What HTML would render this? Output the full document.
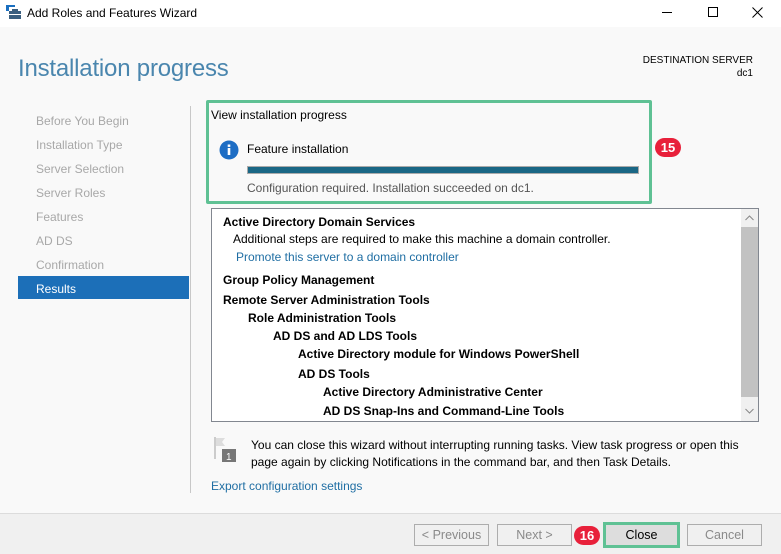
<!DOCTYPE html>
<html><head><meta charset="utf-8"><style>
*{margin:0;padding:0;box-sizing:border-box}
body{width:781px;height:554px;overflow:hidden;background:#f9f9f9;font-family:"Liberation Sans",sans-serif;font-size:12px;color:#000;position:relative}
.a{position:absolute;white-space:nowrap}
.nav{color:#a8a8a8;font-size:12px;left:36px}
.b{font-weight:bold}
.btn{position:absolute;top:524px;height:22px;border:1px solid #adadad;background:#f0f0f0;color:#8a8a8a;text-align:center;line-height:20px;font-size:12.5px}
.badge{position:absolute;background:#e8203a;color:#fff;font-weight:bold;font-size:13px;border-radius:10px;height:19px;line-height:19px;text-align:center;width:26px}
</style></head><body>
<div class="a" style="left:0;top:0;width:781px;height:27px;background:#fff"></div>
<svg class="a" style="left:6px;top:5px" width="16" height="15"><rect x="0" y="0" width="3" height="6" fill="#1a6fc0"/><rect x="0" y="0" width="9" height="2" fill="#1a6fc0"/><rect x="3" y="6" width="12" height="8" fill="#3a5f80"/><rect x="6" y="4" width="6" height="2" fill="#3a5f80"/><rect x="3" y="9" width="12" height="1" fill="#fff"/></svg>
<div class="a" style="left:27px;top:6px;font-size:12px">Add Roles and Features Wizard</div>
<div class="a" style="left:662px;top:12px;width:10px;height:1px;background:#000"></div>
<div class="a" style="left:708px;top:7px;width:10px;height:10px;border:1px solid #000"></div>
<svg class="a" style="left:752px;top:7px" width="11" height="11"><path d="M0.5 0.5L10.5 10.5M10.5 0.5L0.5 10.5" stroke="#000" stroke-width="1"/></svg>
<div class="a" style="left:18px;top:55px;font-size:24px;color:#4a86ae;letter-spacing:-0.2px">Installation progress</div>
<div class="a" style="right:28px;top:54px;font-size:10px;text-align:right;line-height:13px">DESTINATION SERVER<br>dc1</div>
<div class="a" style="left:190px;top:106px;width:1px;height:387px;background:#c8c8c8"></div>
<div class="a nav" style="top:114px">Before You Begin</div>
<div class="a nav" style="top:138px">Installation Type</div>
<div class="a nav" style="top:162px">Server Selection</div>
<div class="a nav" style="top:186px">Server Roles</div>
<div class="a nav" style="top:210px">Features</div>
<div class="a nav" style="top:234px">AD DS</div>
<div class="a nav" style="top:258px">Confirmation</div>
<div class="a" style="left:18px;top:276px;width:171px;height:23px;background:#1c6fb8"></div>
<div class="a" style="left:36px;top:282px;color:#fff">Results</div>
<div class="a" style="left:206px;top:100px;width:446px;height:104px;border:3px solid #5fc194;border-radius:2px"></div>
<div class="a" style="left:211px;top:108px">View installation progress</div>
<svg class="a" style="left:219px;top:140px" width="20" height="20"><circle cx="10" cy="10" r="9.5" fill="#1d6dc4"/><rect x="8.7" y="8" width="2.6" height="7" fill="#fff"/><rect x="8.7" y="4.5" width="2.6" height="2.4" fill="#fff"/></svg>
<div class="a" style="left:247px;top:142px">Feature installation</div>
<div class="a" style="left:247px;top:166px;width:392px;height:8px;background:#1a6785;border:1px solid #aaa"></div>
<div class="a" style="left:247px;top:181px;color:#555">Configuration required. Installation succeeded on dc1.</div>
<div class="badge" style="left:655px;top:138px">15</div>
<div class="a" style="left:211px;top:208px;width:548px;height:214px;border:1px solid #828790;background:#fff"></div>
<div class="a" style="left:741px;top:209px;width:17px;height:212px;background:#f0f0f0"></div>
<div class="a" style="left:741px;top:227px;width:17px;height:170px;background:#c2c2c2"></div>
<svg class="a" style="left:745px;top:215px" width="9" height="6"><path d="M0.5 5L4.5 1L8.5 5" stroke="#888" fill="none"/></svg>
<svg class="a" style="left:745px;top:408px" width="9" height="6"><path d="M0.5 1L4.5 5L8.5 1" stroke="#888" fill="none"/></svg>
<div class="a b" style="left:223px;top:215px">Active Directory Domain Services</div>
<div class="a" style="left:233px;top:232px">Additional steps are required to make this machine a domain controller.</div>
<div class="a" style="left:236px;top:250px;color:#1f6ea3">Promote this server to a domain controller</div>
<div class="a b" style="left:223px;top:273px">Group Policy Management</div>
<div class="a b" style="left:223px;top:293px">Remote Server Administration Tools</div>
<div class="a b" style="left:248px;top:311px">Role Administration Tools</div>
<div class="a b" style="left:273px;top:329px">AD DS and AD LDS Tools</div>
<div class="a b" style="left:298px;top:347px">Active Directory module for Windows PowerShell</div>
<div class="a b" style="left:298px;top:367px">AD DS Tools</div>
<div class="a b" style="left:323px;top:385px">Active Directory Administrative Center</div>
<div class="a b" style="left:323px;top:404px">AD DS Snap-Ins and Command-Line Tools</div>
<svg class="a" style="left:214px;top:437px" width="24" height="26"><rect x="0" y="0" width="2" height="22" fill="#ccc"/><path d="M2 1h9l-3 4 3 4H2z" fill="#ddd"/><rect x="8" y="12" width="14" height="13" fill="#777"/><text x="12" y="23" font-size="10" fill="#fff" font-family="Liberation Sans">1</text></svg>
<div class="a" style="left:251px;top:437px;line-height:17px">You can close this wizard without interrupting running tasks. View task progress or open this<br>page again by clicking Notifications in the command bar, and then Task Details.</div>
<div class="a" style="left:211px;top:479px;color:#1f6ea3">Export configuration settings</div>
<div class="a" style="left:0;top:513px;width:781px;height:41px;background:#f0f0f0;border-top:1px solid #dcdcdc"></div>
<div class="btn" style="left:414px;width:75px">&lt; Previous</div>
<div class="btn" style="left:497px;width:75px">Next &gt;</div>
<div class="badge" style="left:574px;top:526px">16</div>
<div class="a" style="left:603px;top:522px;width:77px;height:26px;border:3px solid #5fc194;background:#ddd;text-align:center;line-height:20px;color:#000;font-size:12.5px">Close</div>
<div class="btn" style="left:687px;width:75px">Cancel</div>
</body></html>
